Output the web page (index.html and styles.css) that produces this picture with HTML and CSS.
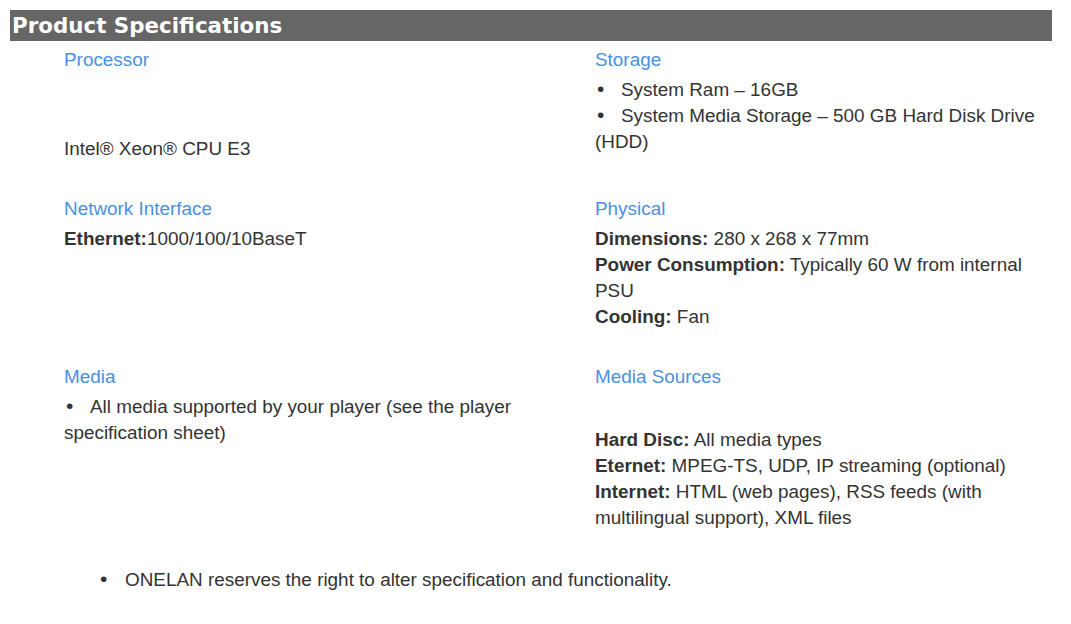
FILE: index.html
```html
<!DOCTYPE html>
<html>
<head>
<meta charset="utf-8">
<link rel="stylesheet" href="styles.css">
</head>
<body>
<div class="page">
  <h2 class="bar">Product Specifications</h2>
  <div class="grid">
    <div class="cell">
      <div class="label">Processor</div>
      <div class="body offset-lg">Intel® Xeon® CPU E3</div>
    </div>
    <div class="cell">
      <div class="label">Storage</div>
      <div class="body">
        <div><span class="dot">•</span>System Ram – 16GB</div>
        <div><span class="dot">•</span>System Media Storage – 500 GB Hard Disk Drive (HDD)</div>
      </div>
    </div>
    <div class="cell">
      <div class="label">Network Interface</div>
      <div class="body"><b>Ethernet:</b>1000/100/10BaseT</div>
    </div>
    <div class="cell">
      <div class="label">Physical</div>
      <div class="body">
        <div><b>Dimensions:</b> 280 x 268 x 77mm</div>
        <div><b>Power Consumption:</b> Typically 60 W from internal PSU</div>
        <div><b>Cooling:</b> Fan</div>
      </div>
    </div>
    <div class="cell">
      <div class="label">Media</div>
      <div class="body">
        <div><span class="dot">•</span>All media supported by your player (see the player specification sheet)</div>
      </div>
    </div>
    <div class="cell">
      <div class="label">Media Sources</div>
      <div class="body offset-md">
        <div><b>Hard Disc:</b> All media types</div>
        <div><b>Eternet:</b> MPEG-TS, UDP, IP streaming (optional)</div>
        <div><b>Internet:</b> HTML (web pages), RSS feeds (with multilingual support), XML files</div>
      </div>
    </div>
  </div>
  <ul class="notes">
    <li><span class="dot note-dot">•</span>ONELAN reserves the right to alter specification and functionality.</li>
  </ul>
</div>
</body>
</html>
```

FILE: styles.css
```css
html, body {
  margin: 0;
  padding: 0;
  background: #ffffff;
}
.page {
  padding: 10px 19px 0 10px;
  font-family: "Liberation Sans", Arial, sans-serif;
  font-size: 18.9px;
  line-height: 26px;
  color: #333333;
}
.bar {
  margin: 0;
  height: 31px;
  background: #666666;
  color: #ffffff;
  font-family: "DejaVu Sans", Verdana, sans-serif;
  font-weight: bold;
  font-size: 21.4px;
  line-height: 32px;
  padding-left: 2px;
}
.grid {
  display: grid;
  grid-template-columns: 500px 455px;
  column-gap: 31px;
  row-gap: 34px;
  margin: 6px 0 0 54px;
}
.label {
  color: #4a90e2;
  margin-bottom: 4px;
}
.offset-lg {
  margin-top: 63px;
}
.offset-md {
  margin-top: 37px;
}
.dot {
  display: inline-block;
  width: 26px;
  padding-left: 2px;
  box-sizing: border-box;
  font-size: 21px;
  line-height: 20px;
}
b {
  font-weight: bold;
}
.notes {
  list-style: none;
  margin: 36px 0 0 0;
  padding-left: 88px;
}
.note-dot {
  width: 27px;
}
```
